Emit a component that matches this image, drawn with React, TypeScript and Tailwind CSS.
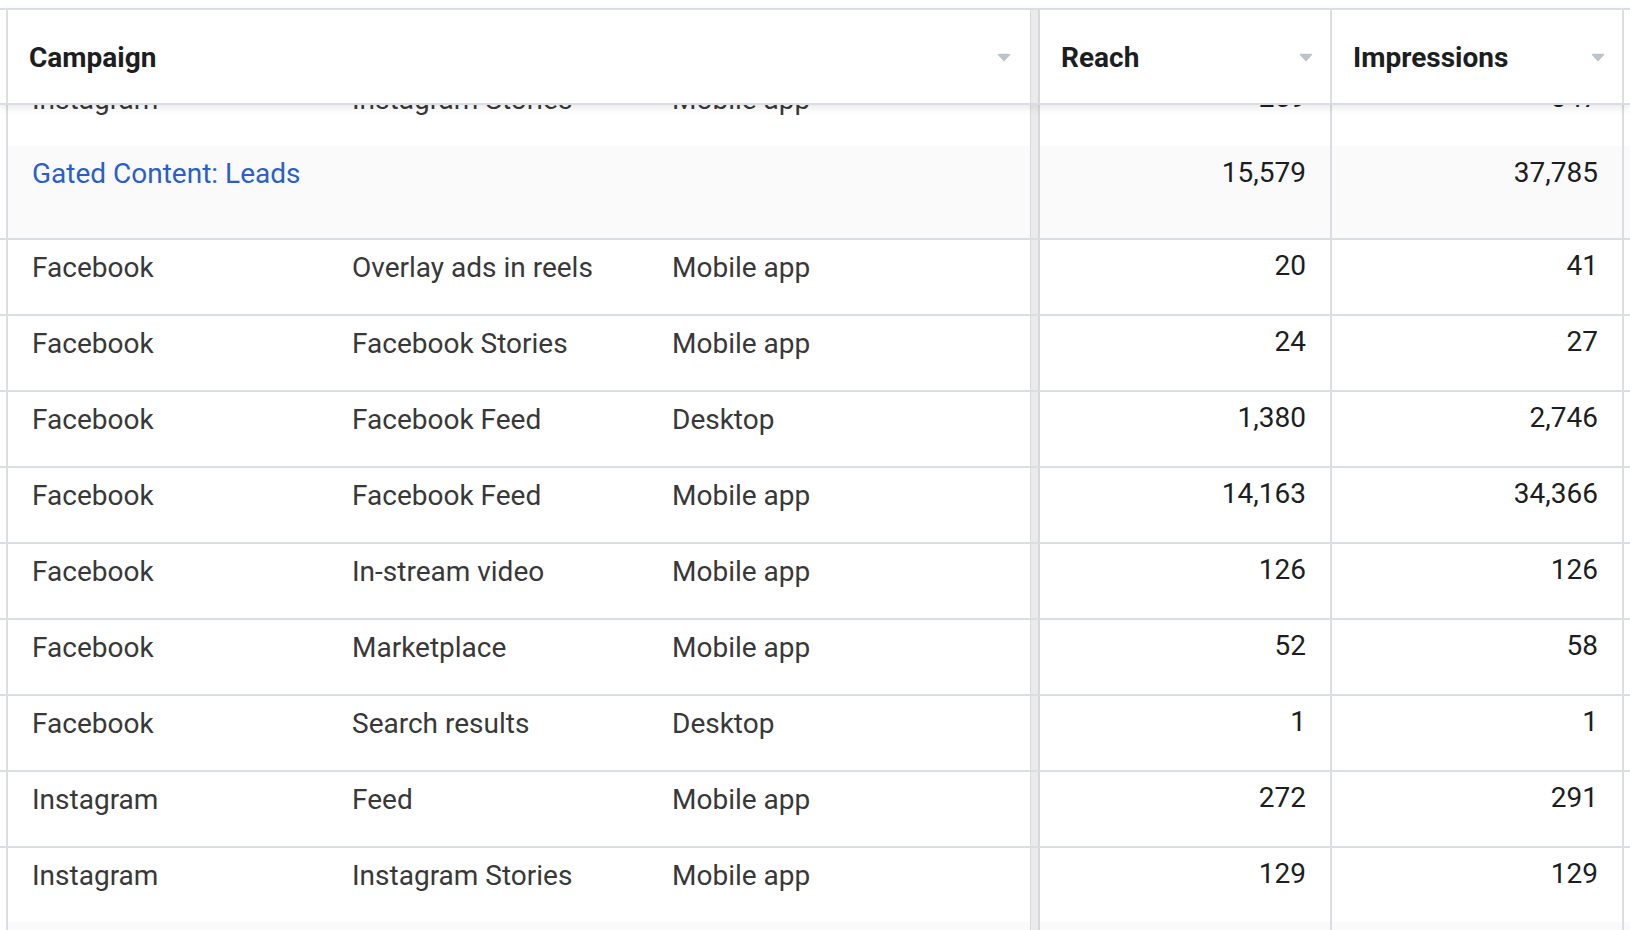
import React from 'react';

type Row = {
  platform: string;
  placement: string;
  device: string;
  reach: string;
  impressions: string;
};

const rows: Row[] = [
  { platform: 'Facebook', placement: 'Overlay ads in reels', device: 'Mobile app', reach: '20', impressions: '41' },
  { platform: 'Facebook', placement: 'Facebook Stories', device: 'Mobile app', reach: '24', impressions: '27' },
  { platform: 'Facebook', placement: 'Facebook Feed', device: 'Desktop', reach: '1,380', impressions: '2,746' },
  { platform: 'Facebook', placement: 'Facebook Feed', device: 'Mobile app', reach: '14,163', impressions: '34,366' },
  { platform: 'Facebook', placement: 'In-stream video', device: 'Mobile app', reach: '126', impressions: '126' },
  { platform: 'Facebook', placement: 'Marketplace', device: 'Mobile app', reach: '52', impressions: '58' },
  { platform: 'Facebook', placement: 'Search results', device: 'Desktop', reach: '1', impressions: '1' },
  { platform: 'Instagram', placement: 'Feed', device: 'Mobile app', reach: '272', impressions: '291' },
  { platform: 'Instagram', placement: 'Instagram Stories', device: 'Mobile app', reach: '129', impressions: '129' },
];

function SortArrow() {
  return (
    <svg width="14" height="9" viewBox="0 0 14 9" className="shrink-0">
      <path d="M1.5 1.5 H12.5 L7 7.5 Z" fill="#bec3c9" stroke="#bec3c9" strokeWidth="1.5" strokeLinejoin="round" />
    </svg>
  );
}

function Divider() {
  return <div className="w-[10px] shrink-0 self-stretch border-l border-r-2 border-[#d6d8db] bg-[#ebebeb]" />;
}

// scrolled row partly hidden under the sticky header
function DataRow({ row, top = true }: { row: Row; top?: boolean }) {
  const textPad = top ? 'pt-[12px]' : 'pt-[14px]';
  const numPad = top ? 'pt-[10px]' : 'pt-[12px]';
  return (
    <div className={`flex h-[76px] border-[#dadde1] ${top ? 'border-t-2' : ''}`}>
      <div className="w-[8px] shrink-0 border-r-2 border-[#dadde1]" />
      <div className="flex w-[1022px] shrink-0 text-[#383838]">
        <div className={`w-[320px] pl-[24px] ${textPad}`}>{row.platform}</div>
        <div className={`w-[320px] pl-[24px] ${textPad}`}>{row.placement}</div>
        <div className={`w-[320px] pl-[24px] ${textPad}`}>{row.device}</div>
      </div>
      <Divider />
      <div className={`w-[292px] shrink-0 border-r-2 border-[#dadde1] pr-[24px] text-right text-[#1c1e21] ${numPad}`}>
        {row.reach}
      </div>
      <div className={`w-[292px] shrink-0 border-r-2 border-[#dadde1] pr-[24px] text-right text-[#1c1e21] ${numPad}`}>
        {row.impressions}
      </div>
      <div className="flex-1" />
    </div>
  );
}

function GroupRow({ name, reach, impressions }: { name?: string; reach?: string; impressions?: string }) {
  return (
    <div className="flex h-[92px]">
      <div className="w-[8px] shrink-0 border-r-2 border-[#dadde1] bg-white" />
      <div className="w-[1022px] shrink-0 bg-[#fafafa] pl-[24px] pt-[12px] text-[#2b5fc7]">{name}</div>
      <Divider />
      <div className="w-[292px] shrink-0 border-r-2 border-[#dadde1] bg-[#fafafa] pr-[24px] pt-[11px] text-right text-[#1c1e21]">
        {reach}
      </div>
      <div className="w-[292px] shrink-0 border-r-2 border-[#dadde1] bg-[#fafafa] pr-[24px] pt-[11px] text-right text-[#1c1e21]">
        {impressions}
      </div>
      <div className="flex-1 bg-[#fafafa]" />
    </div>
  );
}

export default function App() {
  return (
    <div className="h-[930px] w-[1630px] overflow-hidden bg-white font-['Roboto','Liberation_Sans',sans-serif] text-[28px] leading-[32px]">
      <div className="h-[8px]" />
      <div className="relative z-10 flex h-[97px] border-y-2 border-[#dadde1] bg-white font-bold text-[#1c1e21] shadow-[0_3px_8px_rgba(0,0,0,0.09)]">
        <div className="w-[8px] shrink-0 border-r-2 border-[#dadde1]" />
        <div className="flex w-[1022px] shrink-0 items-center justify-between pl-[21px] pr-[19px] pt-[2px]">
          <span>Campaign</span>
          <SortArrow />
        </div>
        <Divider />
        <div className="flex w-[292px] shrink-0 items-center justify-between border-r-2 border-[#dadde1] pl-[21px] pr-[17px] pt-[2px]">
          <span>Reach</span>
          <SortArrow />
        </div>
        <div className="flex w-[292px] shrink-0 items-center justify-between border-r-2 border-[#dadde1] pl-[21px] pr-[17px] pt-[2px]">
          <span>Impressions</span>
          <SortArrow />
        </div>
        <div className="flex-1" />
      </div>
      <div className="h-[825px] overflow-hidden">
        <div className="-mt-[35px]">
          <DataRow
            top={false}
            row={{ platform: 'Instagram', placement: 'Instagram Stories', device: 'Mobile app', reach: '259', impressions: '347' }}
          />
          <GroupRow name="Gated Content: Leads" reach="15,579" impressions="37,785" />
          {rows.map((r, i) => (
            <DataRow key={i} row={r} />
          ))}
          <GroupRow />
        </div>
      </div>
    </div>
  );
}
